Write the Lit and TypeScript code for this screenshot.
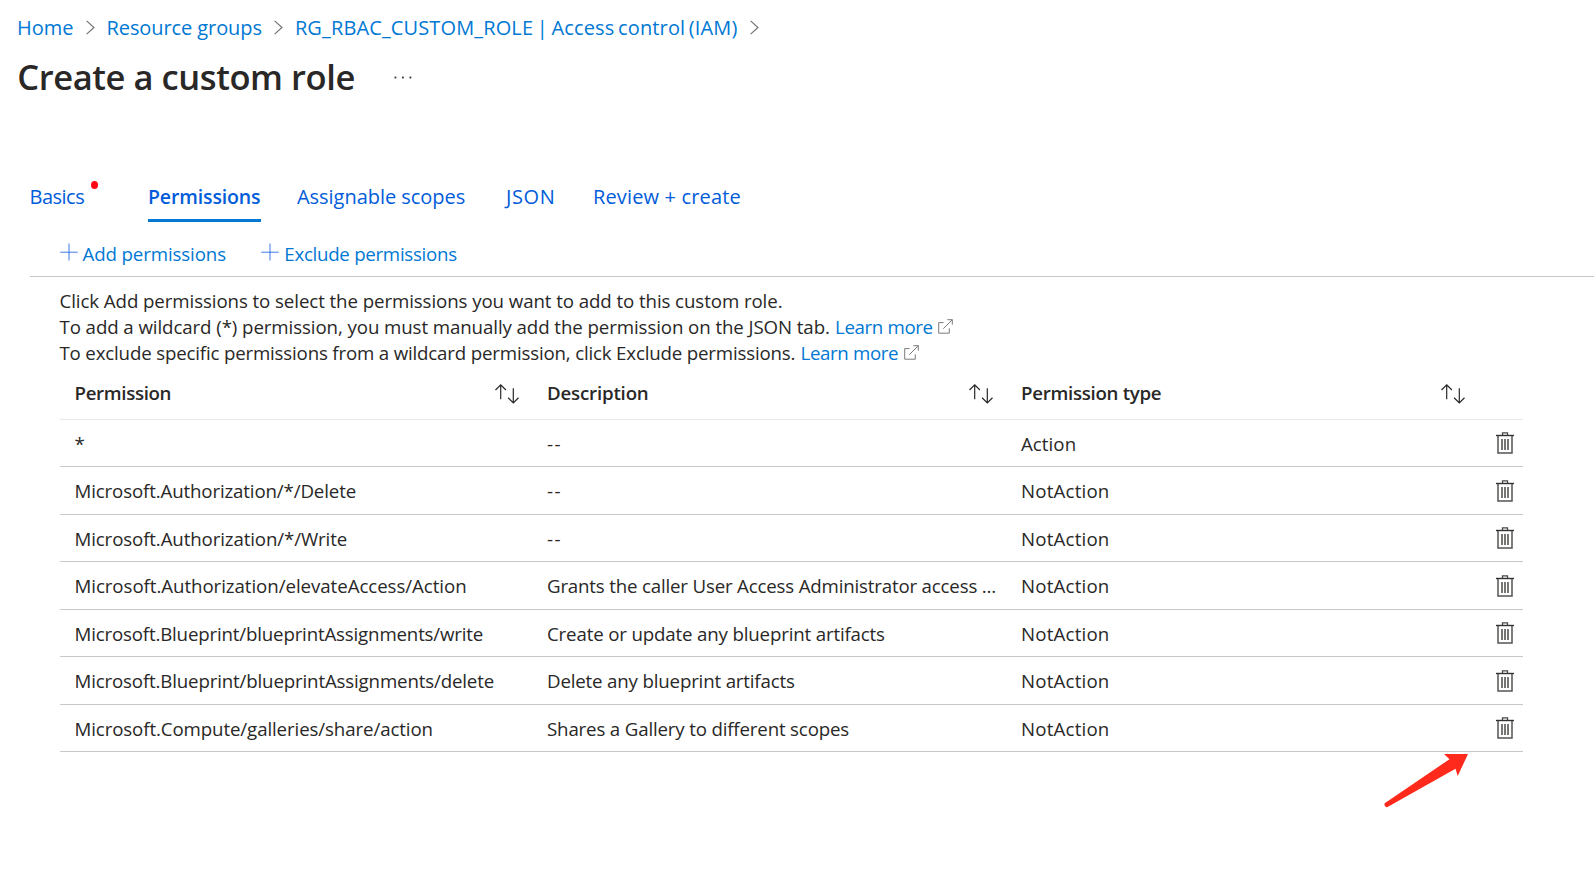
import { LitElement, html, css, svg } from "lit";
import { customElement } from "lit/decorators.js";
import { styleMap } from "lit/directives/style-map.js";

interface Label {
  text: string;
  track: number;
  word?: number;
}

interface Row {
  name: Label;
  description: Label;
  type: Label;
}

const crumbs: Label[] = [
  { text: "Home", track: 0 },
  { text: "Resource groups", track: -0.09 },
  { text: "RG_RBAC_CUSTOM_ROLE | Access control (IAM)", track: 0.13, word: -1.7 },
];

const headers: Label[] = [
  { text: "Permission", track: -0.34 },
  { text: "Description", track: -0.19 },
  { text: "Permission type", track: -0.29 },
];

const none: Label = { text: "--", track: 1.4 };
const notAction: Label = { text: "NotAction", track: 0.18 };

const rows: Row[] = [
  { name: { text: "*", track: 0 }, description: none, type: { text: "Action", track: 0.05 } },
  { name: { text: "Microsoft.Authorization/*/Delete", track: -0.14 }, description: none, type: notAction },
  { name: { text: "Microsoft.Authorization/*/Write", track: -0.12 }, description: none, type: notAction },
  {
    name: { text: "Microsoft.Authorization/elevateAccess/Action", track: -0.06 },
    description: { text: "Grants the caller User Access Administrator access ...", track: -0.18 },
    type: notAction,
  },
  {
    name: { text: "Microsoft.Blueprint/blueprintAssignments/write", track: -0.17 },
    description: { text: "Create or update any blueprint artifacts", track: -0.16 },
    type: notAction,
  },
  {
    name: { text: "Microsoft.Blueprint/blueprintAssignments/delete", track: -0.155 },
    description: { text: "Delete any blueprint artifacts", track: -0.17 },
    type: notAction,
  },
  {
    name: { text: "Microsoft.Compute/galleries/share/action", track: -0.11 },
    description: { text: "Shares a Gallery to different scopes", track: -0.165 },
    type: notAction,
  },
];

const label = (l: Label) =>
  html`<span style=${styleMap({ letterSpacing: `${l.track}px`, wordSpacing: `${l.word ?? 0}px` })}>${l.text}</span>`;

const chevron = html`<svg class="chevron" width="9" height="15" viewBox="0 0 9 15">
  <path d="M.6.8 8 7.5.6 14.2" fill="none" stroke="#6e6e6e" stroke-width="1.1" />
</svg>`;

const plus = html`<svg class="plus" width="18" height="18" viewBox="0 0 18 18">
  <path d="M9 .5v17" stroke="#2667df" stroke-opacity=".6" stroke-width="1.5" />
  <path d="M.3 9.3h17.4" stroke="#2667df" stroke-opacity=".6" stroke-width="1.5" />
</svg>`;

const external = html`<svg class="external" width="15" height="15" viewBox="0 0 15 15">
  <path d="M5.5 3.6H.7v10.6h10.6V9.3M9.3.7h5v5M14.3.7 5.3 9.7" fill="none" stroke="#7d7b79" stroke-width="1" />
</svg>`;

const sort = html`<svg class="sort" width="24" height="20" viewBox="0 0 24 20">
  <path d="M5.7 15.3V1M.5 6 5.7.9 10.9 6M18.3 4.3v14.2M13.1 13.8l5.2 5.1 5.2-5.1" fill="none" stroke="#292827" stroke-width="1.2" />
</svg>`;

const trash = html`<svg class="trash" width="18" height="22" viewBox="0 0 18 22">
  ${svg`<path d="M6.5 3V.8h5V3" fill="none" stroke="#4a4948" stroke-width="1.3" />
  <path d="M0 3.5h18" stroke="#323130" stroke-width="1.4" />
  <path d="M2 4v17.1h14V4" fill="none" stroke="#555453" stroke-width="1.5" />
  <path d="M6 7v11M9 7v11M12 7v11" stroke="#4a4948" stroke-width="1.5" />`}
</svg>`;

@customElement("app-root")
export class AppRoot extends LitElement {
  static styles = css`
    :host {
      display: block;
      position: relative;
      height: 896px;
      overflow: hidden;
      background: #fff;
      color: #292827;
      font-family: "Open Sans", "Noto Sans", sans-serif;
      font-size: 18.7px;
      white-space: nowrap;
    }
    svg { display: block; flex: none; }
    a { color: #0078d4; text-decoration: none; }
    .crumbs {
      display: flex;
      align-items: center;
      height: 55px;
      padding-left: 17px;
      font-size: 20px;
      line-height: 56px;
    }
    .chevron { margin: 0 11.5px 0 12.5px; }
    .heading {
      display: flex;
      align-items: center;
      height: 43px;
      padding: 0 0 2px 17.3px;
      gap: 39px;
    }
    h1 {
      margin: 0;
      font-size: 34.5px;
      font-weight: 600;
      line-height: 43px;
      letter-spacing: -0.42px;
    }
    .tabs {
      display: grid;
      grid-template-columns: 118.5px 149px 209px 87px auto;
      padding: 73px 0 0 29.5px;
      font-size: 20px;
      line-height: 48px;
      color: #015cda;
    }
    .tab { display: flex; height: 49px; }
    .basics { letter-spacing: -0.5px; gap: 6.5px; }
    .dot { width: 7px; height: 8px; margin-top: 8px; border-radius: 50%; background: #ff0a14; }
    .active {
      box-sizing: border-box;
      width: 113px;
      border-bottom: 3px solid #0078d4;
      font-size: 19.5px;
      font-weight: 600;
      letter-spacing: -0.13px;
    }
    .scopes { letter-spacing: -0.04px; }
    .json { letter-spacing: 0.6px; }
    .review { letter-spacing: 0.15px; }
    .toolbar {
      display: flex;
      height: 44px;
      margin-left: 30px;
      padding: 10px 0 0 30px;
      border-bottom: 1px solid #c8c6c4;
      line-height: 44px;
      color: #0078d4;
    }
    .command { display: flex; width: 201px; gap: 4.5px; }
    .exclude { gap: 5.3px; letter-spacing: -0.28px; }
    .add { letter-spacing: -0.12px; }
    .plus { margin-top: 11px; }
    .info { padding: 11px 0 0 59.5px; line-height: 26px; }
    .info div { display: flex; height: 26px; }
    .info a { margin-left: 5.2px; letter-spacing: -0.35px; }
    .external { margin: 5px 0 0 5.5px; }
    .line1 { letter-spacing: -0.086px; }
    .line2 { letter-spacing: -0.09px; }
    .line3 { letter-spacing: -0.175px; }
    .table { width: 1463px; margin: 1px 0 0 60px; }
    .row {
      display: grid;
      grid-template-columns: 472.5px 474px 473.5px 43px;
      box-sizing: border-box;
      height: 48px;
      border-bottom: 1px solid #c8c8c8;
      line-height: 47px;
    }
    .row:nth-child(even) { height: 47px; }
    .row.head {
      height: 53px;
      border-bottom-color: #e8e8e8;
      line-height: 52px;
      font-weight: 600;
    }
    .cell { display: flex; justify-content: space-between; padding: 0 13.5px 0 14.5px; }
    .cell:nth-child(3) { padding-right: 15px; }
    .body .cell { padding-right: 0; }
    .sort { margin-top: 17px; }
    .trash { margin: 12px 0 0 16px; }
    .row:nth-child(odd) .trash { margin-top: 12.5px; }
    .pointer { position: absolute; left: 1380px; top: 750px; }
  `;

  render() {
    return html`
      <nav class="crumbs">${crumbs.map((c) => html`<a>${label(c)}</a>${chevron}`)}</nav>
      <header class="heading">
        <h1>Create a custom role</h1>
        <svg width="18" height="4" viewBox="0 0 18 4" fill="#323130">
          <rect x="0.5" y="1.6" width="1.8" height="1.8" /><rect x="8" y="1.6" width="1.8" height="1.8" /><rect x="15.5" y="1.6" width="1.8" height="1.8" />
        </svg>
      </header>
      <div class="tabs">
        <div class="tab basics">Basics<span class="dot"></span></div>
        <div class="tab active">Permissions</div>
        <div class="tab scopes">Assignable scopes</div>
        <div class="tab json">JSON</div>
        <div class="tab review">Review + create</div>
      </div>
      <div class="toolbar">
        <div class="command add">${plus}<span>Add permissions</span></div>
        <div class="command exclude">${plus}<span>Exclude permissions</span></div>
      </div>
      <div class="info">
        <div><span class="line1">Click Add permissions to select the permissions you want to add to this custom role.</span></div>
        <div><span class="line2">To add a wildcard (*) permission, you must manually add the permission on the JSON tab.</span><a>Learn more</a>${external}</div>
        <div><span class="line3">To exclude specific permissions from a wildcard permission, click Exclude permissions.</span><a>Learn more</a>${external}</div>
      </div>
      <div class="table">
        <div class="row head">${headers.map((h) => html`<div class="cell">${label(h)}${sort}</div>`)}</div>
        ${rows.map(
          (r) => html`<div class="row body">
            <div class="cell">${label(r.name)}</div>
            <div class="cell">${label(r.description)}</div>
            <div class="cell">${label(r.type)}</div>
            ${trash}
          </div>`
        )}
      </div>
      <svg class="pointer" width="92" height="60" viewBox="0 0 92 60">
        <path d="M88 4H64l5.5 5.2L5.8 52.6a2.3 2.3 0 0 0 2.2 4.2L75.5 18.8l2.2 7.2z" fill="#ff2a1c" />
      </svg>
    `;
  }
}
